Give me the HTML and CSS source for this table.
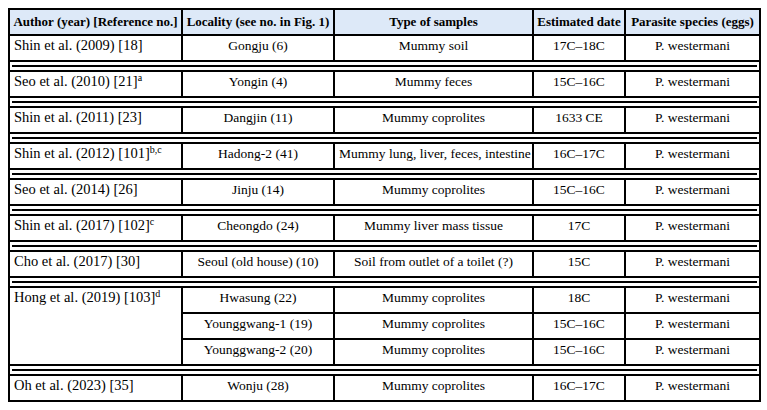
FILE: index.html
```html
<!DOCTYPE html>
<html>
<head>
<meta charset="utf-8">
<link rel="stylesheet" href="styles.css">
</head>
<body>
<table class="tbl">
  <colgroup>
    <col class="c1"><col class="c2"><col class="c3"><col class="c4"><col class="c5">
  </colgroup>
  <thead>
    <tr>
      <th>Author (year) [Reference no.]</th>
      <th>Locality (see no. in Fig. 1)</th>
      <th>Type of samples</th>
      <th>Estimated date</th>
      <th>Parasite species (eggs)</th>
    </tr>
  </thead>
  <tbody>
    <tr>
      <td class="au">Shin et al. (2009) [18]</td>
      <td>Gongju (6)</td>
      <td>Mummy soil</td>
      <td>17C–18C</td>
      <td>P. westermani</td>
    </tr>
    <tr class="sep"><td colspan="5"><div class="rule"></div></td></tr>
    <tr>
      <td class="au">Seo et al. (2010) [21]<sup>a</sup></td>
      <td>Yongin (4)</td>
      <td>Mummy feces</td>
      <td>15C–16C</td>
      <td>P. westermani</td>
    </tr>
    <tr class="sep"><td colspan="5"><div class="rule"></div></td></tr>
    <tr>
      <td class="au">Shin et al. (2011) [23]</td>
      <td>Dangjin (11)</td>
      <td>Mummy coprolites</td>
      <td>1633 CE</td>
      <td>P. westermani</td>
    </tr>
    <tr class="sep"><td colspan="5"><div class="rule"></div></td></tr>
    <tr>
      <td class="au">Shin et al. (2012) [101]<sup>b,c</sup></td>
      <td>Hadong-2 (41)</td>
      <td>Mummy lung, liver, feces, intestine</td>
      <td>16C–17C</td>
      <td>P. westermani</td>
    </tr>
    <tr class="sep"><td colspan="5"><div class="rule"></div></td></tr>
    <tr>
      <td class="au">Seo et al. (2014) [26]</td>
      <td>Jinju (14)</td>
      <td>Mummy coprolites</td>
      <td>15C–16C</td>
      <td>P. westermani</td>
    </tr>
    <tr class="sep"><td colspan="5"><div class="rule"></div></td></tr>
    <tr>
      <td class="au">Shin et al. (2017) [102]<sup>c</sup></td>
      <td>Cheongdo (24)</td>
      <td>Mummy liver mass tissue</td>
      <td>17C</td>
      <td>P. westermani</td>
    </tr>
    <tr class="sep"><td colspan="5"><div class="rule"></div></td></tr>
    <tr>
      <td class="au">Cho et al. (2017) [30]</td>
      <td>Seoul (old house) (10)</td>
      <td>Soil from outlet of a toilet (?)</td>
      <td>15C</td>
      <td>P. westermani</td>
    </tr>
    <tr class="sep"><td colspan="5"><div class="rule"></div></td></tr>
    <tr>
      <td class="au" rowspan="3">Hong et al. (2019) [103]<sup>d</sup></td>
      <td>Hwasung (22)</td>
      <td>Mummy coprolites</td>
      <td>18C</td>
      <td>P. westermani</td>
    </tr>
    <tr>
      <td>Younggwang-1 (19)</td>
      <td>Mummy coprolites</td>
      <td>15C–16C</td>
      <td>P. westermani</td>
    </tr>
    <tr>
      <td>Younggwang-2 (20)</td>
      <td>Mummy coprolites</td>
      <td>15C–16C</td>
      <td>P. westermani</td>
    </tr>
    <tr class="sep"><td colspan="5"><div class="rule"></div></td></tr>
    <tr>
      <td class="au">Oh et al. (2023) [35]</td>
      <td>Wonju (28)</td>
      <td>Mummy coprolites</td>
      <td>16C–17C</td>
      <td>P. westermani</td>
    </tr>
  </tbody>
</table>
</body>
</html>
```
FILE: styles.css
```css
html, body {
  margin: 0;
  padding: 0;
  background: #ffffff;
}
body {
  padding: 8px;
  font-family: "Liberation Serif", "Times New Roman", serif;
  font-size: 13.5px;
  color: #000;
}
.tbl {
  border-collapse: collapse;
  table-layout: fixed;
  width: 751px;
  border: 2px solid #000;
}
.c1 { width: 173px; }
.c2 { width: 152px; }
.c3 { width: 199px; }
.c4 { width: 92px; }
.c5 { width: 135px; }
.tbl th,
.tbl td {
  border: 2px solid #000;
  line-height: 16px;
  text-align: center;
  vertical-align: top;
  padding: 2px 4px 6px;
  white-space: nowrap;
}
.tbl th {
  background: #dde9f8;
  font-weight: bold;
  font-size: 13px;
  padding: 4px 2px 4px;
}
.tbl td.au {
  text-align: left;
  padding-left: 4px;
  font-size: 14.5px;
  line-height: 15px;
}
.tbl sup {
  font-size: 10px;
  line-height: 8px;
  vertical-align: top;
}
.tbl tr.sep td {
  padding: 3px 2px 3px;
  line-height: 0;
}
.rule {
  height: 2px;
  background: #000;
}
```
